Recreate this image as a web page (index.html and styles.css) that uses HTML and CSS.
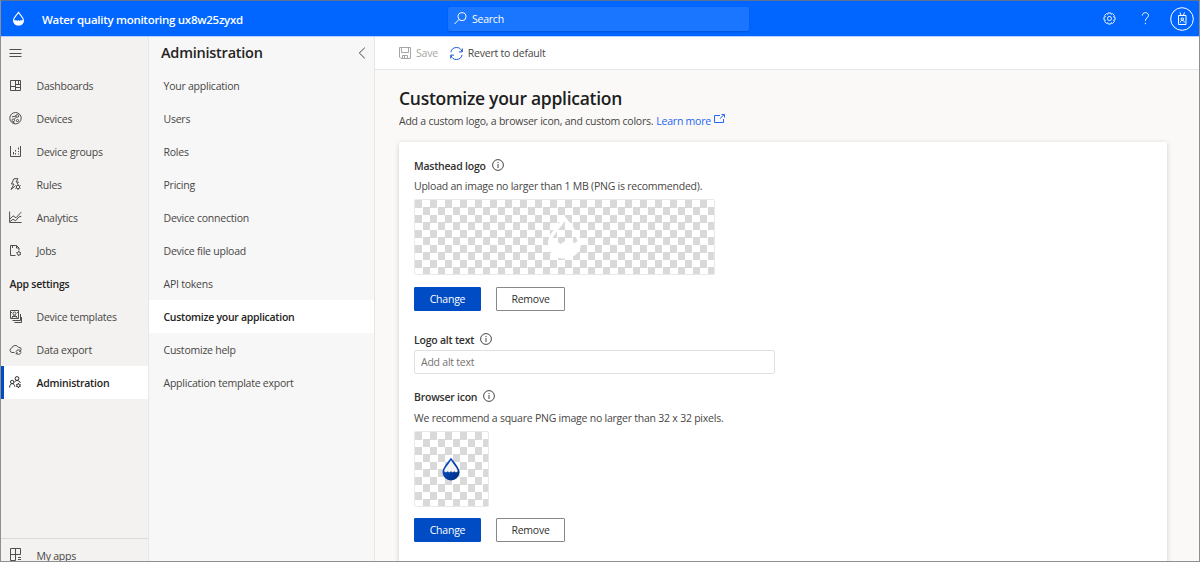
FILE: index.html
```html
<!DOCTYPE html>
<html lang="en">
<head>
<meta charset="utf-8">
<title>Customize your application</title>
<link rel="stylesheet" href="styles.css">
</head>
<body>
<svg class="defs" width="0" height="0">
  <symbol id="info" viewBox="0 0 12 12"><circle cx="6" cy="6" r="5.4"/><path d="M6 5v4M6 3v1.1"/></symbol>
  <symbol id="drop" viewBox="0 0 32 42"><path fill-rule="evenodd" d="M16 0C13 6 0 18 0 27a16 15 0 0 0 32 0C32 18 19 6 16 0ZM16 6C19 11 28 20 28.500 25L26 27L23 25L19 28L16 25L12 28L9 25L6 27L3.500 25C4 20 13 11 16 6Z"/></symbol>
</svg>
<div class="frame">
  <header class="masthead">
    <svg class="logo" viewBox="0 0 32 42"><use href="#drop"/></svg>
    <div class="app-name">Water quality monitoring ux8w25zyxd</div>
    <div class="search">
      <svg class="line" width="13" height="13" viewBox="0 0 13 13"><circle cx="8" cy="4.700" r="4"/><path d="M5 7.500L.5 12"/></svg>
      <span>Search</span>
    </div>
    <div class="tools">
      <svg class="line gear" width="13" height="13" viewBox="0 0 14 14"><path d="M5.600 1h2.800l.4 1.500 1.400-.8 2 2-.8 1.500 1.600.4v2.800l-1.600.4.8 1.500-2 2-1.400-.8-.4 1.500H5.600l-.4-1.500-1.400.8-2-2 .8-1.500L1 8.400V5.600l1.600-.4-.8-1.500 2-2 1.400.8z"/><circle cx="7" cy="7" r="2.200"/></svg>
      <svg class="line help" width="9" height="13" viewBox="0 0 9 13"><path d="M1.300 3.600C1.300 1.700 2.700.7 4.400.7S7.500 1.800 7.500 3.400C7.500 5.700 4.400 6 4.400 8.800M4.400 10.800v1.400"/></svg>
      <svg class="line avatar" width="24" height="24" viewBox="0 0 24 24"><circle cx="12" cy="12" r="11.300"/><path d="M8.500 8.500h7.500v9h-7.500zM10 5.500l1.200 3M14.500 5.500l-1.200 3M10.300 15.500c0-2.800 4-2.800 4 0"/><circle cx="12.300" cy="12" r="1.200"/></svg>
    </div>
  </header>
  <div class="body">
    <nav class="rail">
      <div class="item menu"><svg class="icon" viewBox="0 0 13 13"><path d="M.5 2.500h12M.5 6.500h12M.5 9.500h12"/></svg></div>
      <div class="item"><svg class="icon" viewBox="0 0 13 13"><path d="M1.500 1.500h10v10h-10zM6.500 1.500v10M1.500 7.500h5M6.500 5.500h5M6.500 8.500h5M9.500 1.500v4"/></svg><span>Dashboards</span></div>
      <div class="item"><svg class="icon" viewBox="0 0 13 13"><circle cx="6.500" cy="6.200" r="5.700"/><circle cx="8.300" cy="3.900" r="1.400"/><circle cx="4.300" cy="8.300" r="1.300"/><circle cx="8.500" cy="8.600" r="1.100"/><path d="M3 4.800L6.900 4M5.200 7.300l2.300-2.400M4 10l2 1.500"/></svg><span>Devices</span></div>
      <div class="item"><svg class="icon" viewBox="0 0 13 13"><path d="M1.500 1v10.500h10V1M4.500 7v2.500M6.500 5v1.500M6.500 8v1.500M9.500 2.500v2M9.500 6v1M9.500 8.500v1"/></svg><span>Device groups</span></div>
      <div class="item"><svg class="icon" viewBox="0 0 13 13"><path d="M5 .7h4L7 4h2.500L8 6M5 .7L2.500 6H5l-3 5.500 4-3.300"/><circle cx="9" cy="9" r="1.700"/><path d="M9 6v1.200M9 10.700V12M6.400 7.500l1 .6M10.600 10l1 .6M11.600 7.500l-1 .6M7.400 10l-1 .6"/></svg><span>Rules</span></div>
      <div class="item"><svg class="icon" viewBox="0 0 13 13"><path d="M.6.5v11h12M1 8l3-3.200 3 2L12.200 1.200M1 10.500l3-2.200 2.500 1.500 3.500-4 2.300-.5"/></svg><span>Analytics</span></div>
      <div class="item"><svg class="icon" viewBox="0 0 13 13"><path d="M6.500 11.500h-5v-10h6l2.500 2.500v2.500M7.500 1.500V4H10M3.500 1.500V4"/><circle cx="9.700" cy="9.500" r="1.600"/><path d="M9.700 7v1M9.700 11v1M7.500 8.500l.8.400M11 10.200l.9.400M11.900 8.500l-.9.400"/></svg><span>Jobs</span></div>
      <div class="heading">App settings</div>
      <div class="item"><svg class="icon" viewBox="0 0 13 13"><path d="M1.500.5h8v8h-8zM11.500 4v6.500h-8M12.500 7v5.500h-7"/><circle cx="5.500" cy="3.500" r="1.500"/><path d="M3 8c0-3 5-3 5 0M2 2l1 1M9 2L8 3M3 6.500h5"/></svg><span>Device templates</span></div>
      <div class="item"><svg class="icon" viewBox="0 0 13 13"><path d="M5.500 9.500H3A2.300 2.300 0 0 1 2.800 5 3.600 3.600 0 0 1 9.400 4.300 2.600 2.600 0 0 1 12.300 6.600"/><path d="M7 8.800a2.500 2.500 0 0 1 4.600-.7M11.700 6.700v1.700H10M12 9.300a2.500 2.500 0 0 1-4.600.8M7.200 11.500V9.900h1.600"/></svg><span>Data export</span></div>
      <div class="item active"><svg class="icon" viewBox="0 0 13 13"><circle cx="8" cy="2.500" r="1.900"/><circle cx="3.200" cy="6" r="1.700"/><path d="M.6 11.500c0-5 5-5 5.200-.8M5.500 6.300C6 4 10.800 3.800 11.300 7"/><circle cx="9.400" cy="9.500" r="1.500"/><path d="M9.400 7v1M9.400 11v1M7.200 8.500l.8.400M10.800 10.100l.9.400M7.200 10.500l.8-.4M11.700 8.500l-.9.400"/></svg><span>Administration</span></div>
      <div class="apps"><svg class="icon" viewBox="0 0 13 13"><path d="M6.500 12.500h-5V.5h10v6h-10M6.500.5v12M9 9.500h3M9 11.500h3"/></svg><span>My apps</span></div>
    </nav>
    <nav class="subnav">
      <div class="subhead"><h2>Administration</h2><svg class="line" width="8" height="12" viewBox="0 0 8 12"><path d="M6.800.7L1.300 6l5.500 5.300"/></svg></div>
      <div class="link">Your application</div>
      <div class="link">Users</div>
      <div class="link">Roles</div>
      <div class="link">Pricing</div>
      <div class="link">Device connection</div>
      <div class="link">Device file upload</div>
      <div class="link">API tokens</div>
      <div class="link active">Customize your application</div>
      <div class="link">Customize help</div>
      <div class="link">Application template export</div>
    </nav>
    <main class="main">
      <div class="commands">
        <div class="command disabled"><svg class="line" width="12" height="12" viewBox="0 0 12 12"><path d="M.5.5h11v11H2L.5 10zM2.500.5v5h7v-5M3.500 11.500v-3h5v3M5.500 9v2.500"/></svg><span>Save</span></div>
        <div class="command revert"><svg class="line" width="13" height="13" viewBox="0 0 13 13"><path d="M.9 5.200A5.700 5.700 0 0 1 12 4.700M12.300 1.500v3.400H9M12.100 7.800A5.700 5.700 0 0 1 1 8.300M.7 11.500V8.100H4"/></svg><span>Revert to default</span></div>
      </div>
      <div class="content">
        <h1>Customize your application</h1>
        <p class="intro"><span>Add a custom logo, a browser icon, and custom colors.</span> <a>Learn more</a><svg class="line" width="11" height="10" viewBox="0 0 11 10"><path d="M6 1.500H.5v7h9V5M6 4.500L10 .7M7.500.5h3v3"/></svg></p>
        <section class="card">
          <div class="label"><span>Masthead logo</span><svg class="info"><use href="#info"/></svg></div>
          <p class="hint">Upload an image no larger than 1 MB (PNG is recommended).</p>
          <div class="checker wide"><svg class="white-drop" viewBox="0 0 32 42"><use href="#drop"/></svg></div>
          <div class="buttons"><button class="primary">Change</button><button>Remove</button></div>
          <div class="label alt"><span>Logo alt text</span><svg class="info"><use href="#info"/></svg></div>
          <input type="text" placeholder="Add alt text">
          <div class="label browser"><span>Browser icon</span><svg class="info"><use href="#info"/></svg></div>
          <p class="hint icon-hint">We recommend a square PNG image no larger than 32 x 32 pixels.</p>
          <div class="checker square"><svg class="blue-drop" viewBox="0 0 18 24"><defs><linearGradient id="blue" x2="1" y2="1"><stop stop-color="#0b5bd0"/><stop offset="1" stop-color="#002a80"/></linearGradient></defs><path fill="url(#blue)" d="M9 .5C7 4 .5 10 .5 15.300a8.500 8.200 0 0 0 17 0C17.500 10 11 4 9 .5Z"/><path fill="#f4f4f4" d="M9 3.200C7 6.800 2.500 11 2.200 14.200L4 15.500l1.700-1.200L7.300 15.500 9 14.300l1.700 1.200 1.600-1.200L14 15.500l1.800-1.300C15.500 11 11 6.800 9 3.200Z"/></svg></div>
          <div class="buttons"><button class="primary">Change</button><button>Remove</button></div>
        </section>
      </div>
    </main>
  </div>
</div>
</body>
</html>
```
FILE: styles.css
```css
* { box-sizing: border-box; }
body {
  margin: 0;
  font: 10.5px/16px "Open Sans", "Noto Sans", sans-serif;
  letter-spacing: -0.23px;
  color: #484644;
  overflow: hidden;
}
h1, h2, p { margin: 0; }
svg { flex: none; display: block; }
.defs { position: absolute; }
.line, .icon, .info { fill: none; stroke: currentColor; stroke-width: 1; }
.frame {
  width: 1200px;
  height: 562px;
  border: 1px solid #8f8f8f;
  border-top-color: #5c7292;
  display: flex;
  flex-direction: column;
  overflow: hidden;
}
.masthead {
  height: 35px;
  flex: none;
  background: #0066ff;
  color: #fff;
  display: flex;
  align-items: center;
}
.logo { width: 11px; height: 15px; margin-left: 12px; fill: #fff; }
.app-name { width: 406px; margin-left: 18px; font-size: 11.5px; font-weight: 600; letter-spacing: -.28px; margin-top: 2px; }
.search {
  width: 301px;
  height: 24px;
  background: #1a75ff;
  border-radius: 2px;
  box-shadow: 0 1px 2px rgba(0, 40, 140, .3);
  display: flex;
  align-items: center;
  gap: 5px;
  padding-left: 6px;
}
.tools { margin-left: auto; margin-right: 5px; display: flex; align-items: center; }
.help { margin-left: 25px; }
.avatar { margin-left: 20px; }
.body { flex: 1; min-height: 0; display: flex; border-top: 1px solid #b3d1ff; }
.rail { width: 148px; background: #f3f2f1; border-right: 1px solid #e6e8e7; display: flex; flex-direction: column; }
.item, .heading { height: 33px; flex: none; display: flex; align-items: center; padding-left: 8px; }
.item.menu { height: 32px; }
.icon { width: 13px; height: 13px; margin-right: 14.5px; stroke-width: .95; }
.heading { font-weight: 600; color: #252423; padding: 1px 0 0 8.5px; }
.item span, .link { padding-top: 1px; }
.item.active { background: #fff; border-left: 3px solid #004cc4; padding-left: 5px; font-weight: 600; color: #252423; }
.apps { margin-top: auto; height: 23px; border-top: 1px solid #dddbda; display: flex; padding: 9px 0 0 8px; white-space: nowrap; }
.subnav { width: 226px; flex: none; background: #f7f7f7; border-right: 1px solid #e6e6e6; }
.subhead { height: 32px; display: flex; align-items: center; justify-content: space-between; padding: 0 8px 1px 12px; }
h2 { font-size: 14.5px; font-weight: 600; line-height: 20px; color: #252423; letter-spacing: -.24px; }
.link { height: 33px; display: flex; align-items: center; padding-left: 14.5px; }
.link.active { background: #fff; font-weight: 600; color: #252423; letter-spacing: -.28px; }
.main { flex: 1; min-width: 0; background: #faf9f8; }
.commands { height: 33px; background: #fff; border-bottom: 1px solid #e5e5e5; display: flex; align-items: center; padding-left: 24px; }
.command { display: flex; align-items: center; gap: 5px; }
.disabled { color: #a8a6a4; }
.revert { margin-left: 12px; }
.revert svg { color: #1d5bd6; }
.content { padding: 16px 32px 0 24px; }
h1 { font-size: 17.5px; line-height: 24px; font-weight: 600; color: #201f1e; letter-spacing: -.28px; }
.intro { margin-top: 3px; display: flex; gap: 3px; }
.intro a, .intro svg { color: #2467f5; }
.intro svg { margin-top: 1px; }
.card {
  margin-top: 13px;
  height: 460px;
  background: #fff;
  border-radius: 2px;
  box-shadow: 0 1px 5px rgba(0, 0, 0, .18);
  padding: 16px 15px;
}
.label { display: flex; height: 16px; font-weight: 600; color: #323130; gap: 6px; }
.info { width: 12px; height: 12px; margin-top: 1px; stroke-width: .9; }
.hint { margin-top: 4px; }
.icon-hint { margin-top: 5px; }
.checker {
  border: 1px solid #e9e9e9;
  border-radius: 2px;
  background: repeating-conic-gradient(#fff 0 25%, #d9d9d9 0 50%) 0 0 / 15px 15px;
  display: flex;
  align-items: center;
  justify-content: center;
}
.wide { width: 301px; height: 76px; margin-top: 5px; }
.square { width: 75px; height: 76px; margin-top: 5px; }
.white-drop { width: 33px; height: 44px; fill: #fff; }
.blue-drop { width: 18px; height: 24px; margin-right: 2px; }
.buttons { display: flex; gap: 15px; margin-top: 12px; }
.square + .buttons { margin-top: 11px; }
button {
  width: 69px;
  height: 24px;
  border: 1px solid #8a8886;
  border-radius: 1px;
  background: #fff;
  color: #323130;
  font: inherit;
  letter-spacing: inherit;
  padding: 0;
}
button.primary { width: 67px; background: #004cc4; border-color: #004cc4; color: #fff; }
.alt { margin-top: 21px; }
input { display: block; width: 361px; height: 24px; margin-top: 2px; border: 1px solid #dfdfdf; border-radius: 2px; font: inherit; letter-spacing: inherit; padding: 0 6px; }
input::placeholder { color: #757371; opacity: 1; }
.browser { margin-top: 15px; }
```
